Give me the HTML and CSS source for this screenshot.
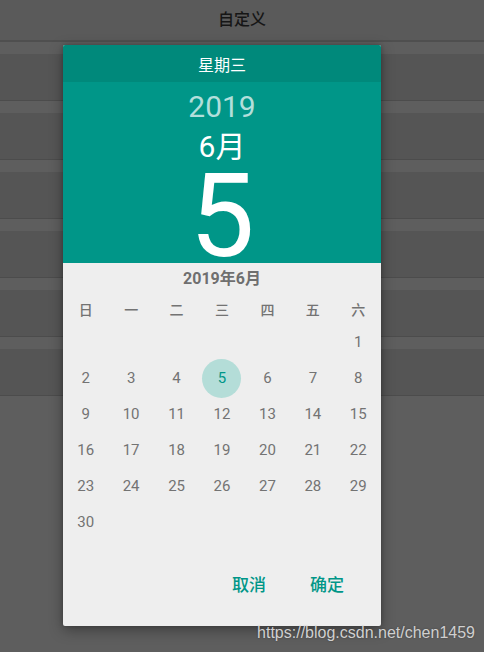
FILE: index.html
```html
<!DOCTYPE html>
<html lang="zh">
<head>
<meta charset="utf-8">
<title>日期选择</title>
<link rel="stylesheet" href="styles.css">
</head>
<body>
<div class="screen">
  <div class="titlebar">自定义</div>
  <div class="list">
    <div class="item"></div>
    <div class="item"></div>
    <div class="item"></div>
    <div class="item"></div>
    <div class="item"></div>
    <div class="item"></div>
  </div>

  <div class="dialog">
    <div class="dow-band">星期三</div>
    <div class="header">
      <div class="year">2019</div>
      <div class="month">6月</div>
      <div class="day">5</div>
    </div>
    <div class="body">
      <div class="month-title">2019年6月</div>
      <div class="weekdays">
        <span>日</span><span>一</span><span>二</span><span>三</span><span>四</span><span>五</span><span>六</span>
      </div>
      <div class="days">
        <span></span><span></span><span></span><span></span><span></span><span></span><span>1</span>
        <span>2</span><span>3</span><span>4</span><span class="sel"><i>5</i></span><span>6</span><span>7</span><span>8</span>
        <span>9</span><span>10</span><span>11</span><span>12</span><span>13</span><span>14</span><span>15</span>
        <span>16</span><span>17</span><span>18</span><span>19</span><span>20</span><span>21</span><span>22</span>
        <span>23</span><span>24</span><span>25</span><span>26</span><span>27</span><span>28</span><span>29</span>
        <span>30</span>
      </div>
      <div class="actions">
        <span class="btn">取消</span>
        <span class="btn">确定</span>
      </div>
    </div>
  </div>

  <div class="watermark">https://blog.csdn.net/chen1459</div>
</div>
</body>
</html>
```

FILE: styles.css
```css
html, body {
  margin: 0;
  padding: 0;
}
body {
  background: #5e5e5e;
  font-family: Roboto, "Noto Sans CJK SC", sans-serif;
}
.screen {
  position: relative;
  width: 484px;
  height: 652px;
  overflow: hidden;
  background: #5e5e5e;
}
.titlebar {
  height: 40px;
  line-height: 36px;
  text-align: center;
  background: #5a5a5a;
  border-bottom: 2px solid #4f4f4f;
  color: #161616;
  font-size: 16px;
  font-weight: 500;
  font-family: "Noto Sans CJK SC", sans-serif;
}
.list {
  display: flex;
  flex-direction: column;
}
.item {
  margin-top: 12px;
  height: 46px;
  background: #555555;
  border-bottom: 1px solid #4c4c4c;
}

.dialog {
  position: absolute;
  left: 63px;
  top: 45px;
  width: 318px;
  height: 581px;
  background: #eeeeee;
  border-radius: 2px;
  box-shadow: 0 4px 14px rgba(0, 0, 0, 0.35), 0 0 4px rgba(0, 0, 0, 0.2);
  display: flex;
  flex-direction: column;
}
.dow-band {
  height: 37px;
  line-height: 39px;
  background: #00897b;
  border-radius: 2px 2px 0 0;
  color: #ffffff;
  text-align: center;
  font-size: 16px;
  font-family: "Noto Sans CJK SC", sans-serif;
}
.header {
  height: 181px;
  background: #009688;
  color: #ffffff;
  display: flex;
  flex-direction: column;
  align-items: center;
}
.year {
  margin-top: 7px;
  font-size: 30px;
  line-height: 36px;
  color: #b2dfdb;
}
.month {
  margin-top: 4px;
  font-size: 30px;
  line-height: 36px;
}
.day {
  margin-top: 6px;
  font-size: 116px;
  line-height: 90px;
}
.body {
  flex: 1;
  display: flex;
  flex-direction: column;
}
.month-title {
  margin-top: 5px;
  line-height: 22px;
  text-align: center;
  font-size: 16px;
  font-weight: bold;
  color: #6f6f6f;
}
.weekdays {
  margin-top: 5px;
  height: 28px;
  display: grid;
  grid-template-columns: repeat(7, 1fr);
  align-items: center;
  justify-items: center;
  font-size: 14px;
  font-weight: 500;
  color: #737373;
  font-family: "Noto Sans CJK SC", sans-serif;
}
.days {
  margin-top: 1px;
  display: grid;
  grid-template-columns: repeat(7, 1fr);
  grid-auto-rows: 36px;
  align-items: center;
  justify-items: center;
  font-size: 15px;
  color: #737373;
}
.days .sel i {
  font-style: normal;
  width: 39px;
  height: 39px;
  border-radius: 50%;
  background: #b4ddd8;
  color: #009688;
  display: flex;
  align-items: center;
  justify-content: center;
}
.actions {
  margin-top: 26px;
  display: flex;
  justify-content: flex-end;
  gap: 44px;
  padding-right: 37px;
  line-height: 36px;
}
.btn {
  font-size: 17px;
  font-weight: 500;
  color: #009688;
  font-family: "Noto Sans CJK SC", sans-serif;
}
.watermark {
  position: absolute;
  right: 9px;
  bottom: 9px;
  font-family: "Liberation Sans", Arial, sans-serif;
  font-size: 16px;
  line-height: 20px;
  color: #d0d0d0;
  text-shadow: 0 0 2px rgba(0, 0, 0, 0.35);
}
```
